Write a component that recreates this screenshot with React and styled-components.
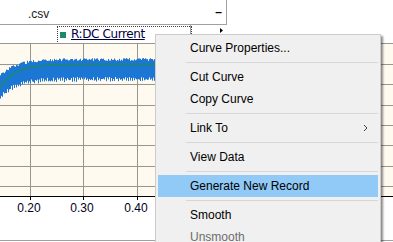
import React from "react";
import styled, { createGlobalStyle } from "styled-components";

const GlobalStyle = createGlobalStyle`
  html, body {
    margin: 0;
    padding: 0;
    background: #ffffff;
  }
  body {
    font-family: "Liberation Sans", Arial, sans-serif;
    font-size: 12px;
  }
`;

const Window = styled.div`
  position: relative;
  width: 393px;
  height: 242px;
  overflow: hidden;
  background: #ffffff;
`;

const TitleBar = styled.div`
  width: 226px;
  height: 24px;
  display: flex;
  border-bottom: 1px solid #a0a0a0;
  border-right: 1px solid #a0a0a0;
  box-sizing: content-box;
`;

const Title = styled.div`
  padding: 8px 0 0 28px;
  line-height: 12px;
  color: #202020;
`;

const MinButton = styled.div`
  margin-left: auto;
  padding: 6px 4px 0 0;
  font-weight: bold;
  line-height: 12px;
  color: #000;
`;

const ChartArea = styled.div`
  position: relative;
  width: 393px;
  height: 217px;
`;

const Legend = styled.div`
  position: absolute;
  left: 57px;
  top: 1px;
  width: 131px;
  height: 15px;
  border: 1px dotted #404040;
  border-bottom: none;
  display: flex;
  align-items: center;
  gap: 5px;
  padding-left: 2px;
  box-sizing: content-box;
`;

const Swatch = styled.span`
  width: 6px;
  height: 6px;
  background: ${p => p.color};
`;

const LegendText = styled.span`
  font-family: "DejaVu Sans", Verdana, sans-serif;
  font-size: 12px;
  letter-spacing: -0.4px;
  color: #000040;
  text-decoration: underline;
  line-height: 15px;
`;

const Menu = styled.div`
  position: absolute;
  left: 155px;
  top: 34px;
  width: 224px;
  padding: 2px 0;
  background: #f0f0f0;
  border: 1px solid #cccccc;
  box-shadow: 2px 2px 2px rgba(0, 0, 0, 0.45);
`;

const Item = styled.div`
  height: 22px;
  margin: 0 2px;
  padding-left: 32px;
  padding-right: 10px;
  display: flex;
  align-items: center;
  justify-content: space-between;
  background: ${p => (p.active ? "#91c9f7" : "transparent")};
  color: ${p => (p.disabled ? "#6d6d6d" : "#000000")};
  font-family: "Liberation Sans", Arial, sans-serif;
  font-size: 12px;
`;

const Separator = styled.div`
  height: 1px;
  margin: 3px 2px 3px 30px;
  background: #d7d7d7;
`;

const ChevronRight = () => (
  <svg width="5" height="8" viewBox="0 0 5 8">
    <path d="M1 1 L4 4 L1 7" fill="none" stroke="#404040" strokeWidth="1" />
  </svg>
);

function rng(seed) {
  let s = seed;
  return () => {
    s = (s * 1103515245 + 12345) % 2147483648;
    return s / 2147483648;
  };
}

const Plot = () => {
  const rand = rng(42);
  const spikes = [];
  for (let x = 0; x < 160; x += 1) {
    const top = 61 + 16 * Math.exp(-x / 15) - rand() * 3;
    const bot = 79 + 18 * Math.exp(-x / 15) + rand() * 3 - (x % 2) * 2;
    spikes.push(`M${x + 0.5} ${top.toFixed(1)} V${bot.toFixed(1)}`);
  }
  const green = [];
  for (let x = 0; x <= 160; x += 2) {
    const g = 64.5 + 23 * Math.exp(-x / 15);
    green.push(`${x},${g.toFixed(1)}`);
  }
  const vGrid = [30, 83, 137, 190];
  const hGrid = [64, 84, 105, 125, 145, 166, 186];
  const ticks = [
    { x: 30, label: "0.20" },
    { x: 83, label: "0.30" },
    { x: 137, label: "0.40" }
  ];

  return (
    <svg width="393" height="217" style={{ display: "block" }}>
      <g transform="translate(0,-25)">
        <rect x="0" y="43" width="393" height="153" fill="#fffaf0" />
        <line x1="0" y1="43.5" x2="393" y2="43.5" stroke="#9a968e" />
        {vGrid.map(x => (
          <line key={x} x1={x + 0.5} y1="43" x2={x + 0.5} y2="196" stroke="#9a968e" />
        ))}
        {hGrid.map(y => (
          <line key={y} x1="0" y1={y + 0.5} x2="393" y2={y + 0.5} stroke="#9a968e" />
        ))}
        <path d={spikes.join(" ")} stroke="#1c76d4" strokeWidth="1" />
        <polyline points={green.join(" ")} fill="none" stroke="#1b8a6b" strokeWidth="1.5" />
        <line x1="0" y1="196.5" x2="393" y2="196.5" stroke="#000" />
        {ticks.map(t => (
          <g key={t.x}>
            <line x1={t.x + 0.5} y1="196" x2={t.x + 0.5} y2="200" stroke="#000" />
            <text
              x={t.x - 1}
              y="212"
              textAnchor="middle"
              fontFamily="Liberation Sans, Arial, sans-serif"
              fontSize="12"
              fill="#000020"
            >
              {t.label}
            </text>
          </g>
        ))}
        <line x1="0" y1="240.5" x2="393" y2="240.5" stroke="#a0a0a0" />
        <line x1="190.5" y1="25" x2="190.5" y2="34" stroke="#a0a0a0" />
        <path d="M220 28 L223 30.5 L220 33 Z" fill="#000" />
      </g>
    </svg>
  );
};

const menuItems = [
  { label: "Curve Properties..." },
  { sep: true },
  { label: "Cut Curve" },
  { label: "Copy Curve" },
  { sep: true },
  { label: "Link To", submenu: true },
  { sep: true },
  { label: "View Data" },
  { sep: true },
  { label: "Generate New Record", active: true },
  { sep: true },
  { label: "Smooth" },
  { label: "Unsmooth", disabled: true }
];

const App = () => {
  return (
    <>
      <GlobalStyle />
      <Window>
        <TitleBar>
          <Title>.csv</Title>
          <MinButton>–</MinButton>
        </TitleBar>
        <ChartArea>
          <Plot />
          <Legend>
            <Swatch color="#1b8a6b" />
            <LegendText>R:DC Current</LegendText>
          </Legend>
        </ChartArea>
        <Menu>
          {menuItems.map((m, i) =>
            m.sep ? (
              <Separator key={i} />
            ) : (
              <Item key={i} active={m.active} disabled={m.disabled}>
                <span>{m.label}</span>
                {m.submenu && <ChevronRight />}
              </Item>
            )
          )}
        </Menu>
      </Window>
    </>
  );
};

export default App;
